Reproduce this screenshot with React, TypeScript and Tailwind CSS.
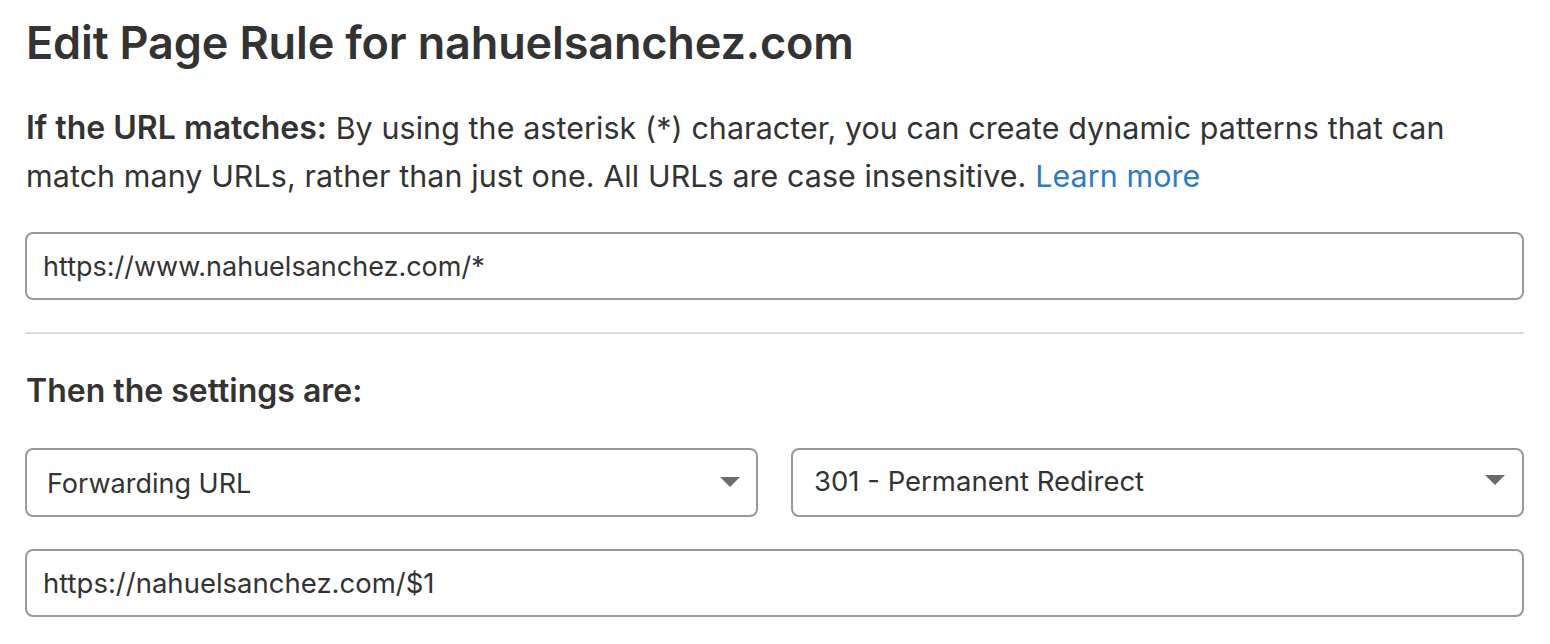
import React from "react";

function Caret() {
  return (
    <svg width="20" height="11" viewBox="0 0 20 11" className="shrink-0">
      <path d="M0 0 L20 0 L10 10 Z" fill="#6b6b6b" />
    </svg>
  );
}

export default function App() {
  return (
    <div className="w-[1550px] h-[644px] bg-white overflow-hidden text-[#333333] font-['Inter',sans-serif]">
      <div className="pl-[25px] pr-[26px] pt-[15px]">
        <h1 className="text-[45px] leading-[56px] font-semibold tracking-[-0.15px] ml-[1px]">
          Edit Page Rule for nahuelsanchez.com
        </h1>
        <p className="mt-[33px] text-[30.4px] leading-[48px] tracking-[0.1px] ml-[1px] whitespace-nowrap">
          <span className="font-semibold text-[32px] tracking-[0px]">If the URL matches:</span> By using the asterisk (*) character, you can create dynamic patterns that can
          <br />
          match many URLs, rather than just one. All URLs are case insensitive.{" "}
          <span className="text-[#2f7bbf]">Learn more</span>
        </p>
        <div className="mt-[32px] h-[68px] border-2 border-[#999999] rounded-[8px] flex items-center px-[16px] text-[27px]">
          <span className="mt-[2px]">https://www.nahuelsanchez.com/*</span>
        </div>
        <div className="mt-[32px] h-[2px] bg-[#dcdcdc]" />
        <h2 className="mt-[37px] text-[32px] leading-[40px] font-semibold ml-[1px]">Then the settings are:</h2>
        <div className="mt-[37px] grid grid-cols-2 gap-[33px]">
          <div className="h-[69px] border-2 border-[#999999] rounded-[8px] flex items-center justify-between pl-[20px] pr-[16px] text-[27px]">
            <span className="mt-[3px]">Forwarding URL</span>
            <Caret />
          </div>
          <div className="h-[69px] border-2 border-[#999999] rounded-[8px] flex items-center justify-between pl-[21px] pr-[17px] text-[27.5px]">
            <span className="-mt-[1px]">301 - Permanent Redirect</span>
            <span className="-mt-[4px]"><Caret /></span>
          </div>
        </div>
        <div className="mt-[32px] h-[68px] border-2 border-[#999999] rounded-[8px] flex items-center px-[16px] text-[27.5px]">
          <span className="mt-[2px]">https://nahuelsanchez.com/$1</span>
        </div>
      </div>
    </div>
  );
}
